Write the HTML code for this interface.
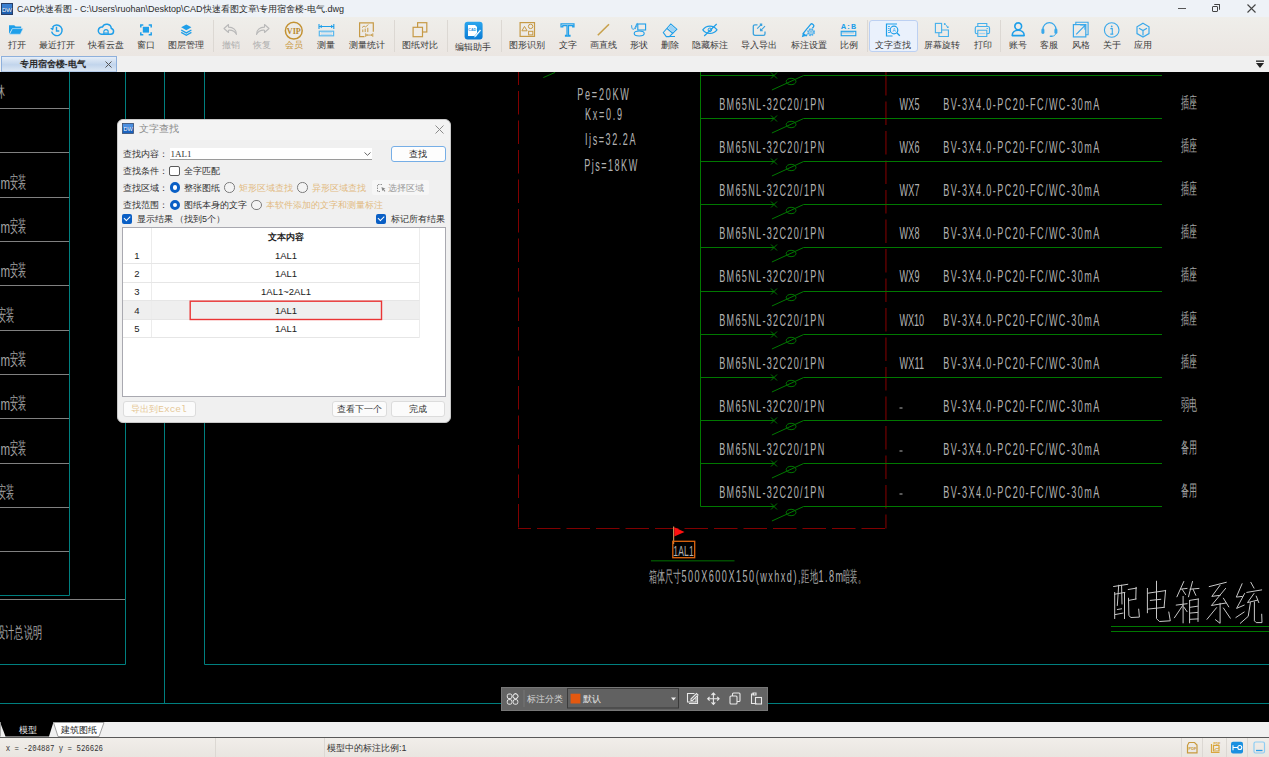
<!DOCTYPE html>
<html><head><meta charset="utf-8">
<style>
*{box-sizing:border-box}
html,body{margin:0;padding:0}
body{width:1269px;height:757px;overflow:hidden;position:relative;background:#000;font-family:"Liberation Sans",sans-serif}
.a{position:absolute}
#title{left:0;top:0;width:1269px;height:17px;background:#eef2f7}
#toolbar{left:0;top:17px;width:1269px;height:39px;background:linear-gradient(#efeeea,#ebe6e2)}
#tabbar{left:0;top:56px;width:1269px;height:16px;background:#f0f0f0}
.lbl{position:absolute;top:40px;font-size:9px;line-height:10px;color:#3a3a3a;white-space:nowrap;transform:translateX(-50%)}
.ic{position:absolute;overflow:visible}
.sep{position:absolute;top:20px;width:1px;height:32px;background:#dcd8d3}
#canvas{left:0;top:72px;width:1269px;height:650px;background:#000}
#sheettabs{left:0;top:722px;width:1269px;height:15px;background:#f0f0f0}
#status{left:0;top:737px;width:1269px;height:20px;background:linear-gradient(#f1eeea,#e9e5e0);border-top:1px solid #585858}
.dl{font-size:9px;line-height:10px;color:#333;white-space:nowrap}
.rad{width:10.5px;height:10.5px;border-radius:50%;border:1px solid #7d7d7d;background:#f3f3f3}
.rad.on{border:3.2px solid #0a5fc5;background:#fff}
.chk{width:10px;height:10px;border-radius:2px;background:#0a5fc5}
.chk::after{content:"";position:absolute;left:2.3px;top:2px;width:4.5px;height:2.5px;border-left:1.2px solid #fff;border-bottom:1.2px solid #fff;transform:rotate(-45deg)}
.num{font-size:9.5px;line-height:11px;color:#222;transform:translateX(-50%);white-space:nowrap}
.btn{background:#fbfbfb;border:1px solid #dcdcdc;border-radius:3px}
</style></head><body>
<div id="title" class="a">
<svg class="a" style="left:1px;top:3px" width="12" height="12" viewBox="0 0 12 12"><rect x="0.5" y="0.5" width="11" height="11" fill="#1d5fb0" stroke="#2a3f66"/><rect x="1" y="1" width="10" height="4" fill="#3a7fd0"/><text x="6" y="9" font-size="6" fill="#fff" text-anchor="middle" font-family="Liberation Sans">DW</text></svg>
<div class="a" style="left:17px;top:2.5px;font-size:9px;line-height:12px;color:#2b2b2b;white-space:nowrap">CAD快速看图 - C:\Users\ruohan\Desktop\CAD快速看图文章\专用宿舍楼-电气.dwg</div>
<div class="a" style="left:1178px;top:8px;width:8px;height:1px;background:#555"></div>
<div class="a" style="left:1212px;top:6px;width:6px;height:6px;border:1.2px solid #444;border-radius:1px"></div>
<div class="a" style="left:1214px;top:4px;width:6px;height:6px;border-top:1.2px solid #444;border-right:1.2px solid #444;border-radius:1px"></div>
<svg class="a" style="left:1247px;top:4px" width="9" height="9" viewBox="0 0 9 9"><path d="M0.5 0.5L8.5 8.5M8.5 0.5L0.5 8.5" stroke="#444" stroke-width="1.1"/></svg>
</div>
<div id="toolbar" class="a"></div>
<div class="a" style="left:868.8px;top:19.7px;width:49px;height:32.8px;background:#eaf1fc;border:1px solid #bcd0f2;border-radius:3px"></div>
<div class="sep" style="left:213px"></div><div class="sep" style="left:393.6px"></div><div class="sep" style="left:447px"></div><div class="sep" style="left:500.5px"></div><div class="sep" style="left:866.6px"></div><div class="sep" style="left:1000.4px"></div>
<svg class="a" style="left:0;top:0" width="1269" height="56" viewBox="0 0 1269 56">
<!-- folder -->
<path d="M9 25.2h5.2l1.4 1.4h5.6v1.9H12.1L9 33.9z" fill="#1f9fe9"/>
<path d="M9.6 34.2l2.9-5.6h10.6l-2.8 5.6z" fill="#1f9fe9" stroke="#cfe9fa" stroke-width="0.5"/>
<!-- clock -->
<path d="M52.4 27.3A5.3 5.3 0 1 1 51.6 31.6" fill="none" stroke="#1f9fe9" stroke-width="1.4"/>
<path d="M50.1 28.4l2.9 2.1 1-3.5z" fill="#1f9fe9"/>
<path d="M56.5 26.8v4.2h2.8" fill="none" stroke="#1f9fe9" stroke-width="1.4"/>
<!-- cloud -->
<path d="M101.5 34.3h9.2a3 3 0 0 0 0.6-5.9 4.6 4.6 0 0 0-8.8-1.4 3.6 3.6 0 0 0-1 7.3z" fill="none" stroke="#1f9fe9" stroke-width="1.5"/>
<path d="M103.8 35v-3.2a2.2 2.2 0 0 1 4.4 0V35M103.8 33h4.4" fill="none" stroke="#1f9fe9" stroke-width="1.1"/>
<!-- window -->
<rect x="142.8" y="26.8" width="6.2" height="5.8" fill="#1f9fe9"/>
<path d="M140.8 27.5v-2.5h2.5M148.7 25h2.5v2.5M151.2 32.2v2.5h-2.5M143.3 34.7h-2.5v-2.5" fill="none" stroke="#1f9fe9" stroke-width="1.5"/>
<!-- layers -->
<path d="M181.2 27.3l5.1-2.9 5.1 2.9-5.1 2.9z" fill="#1f9fe9"/>
<path d="M181.2 30l5.1 2.9 5.1-2.9M181.2 32.4l5.1 2.9 5.1-2.9" fill="none" stroke="#1f9fe9" stroke-width="1.3"/>
<!-- undo -->
<path d="M228.5 24.5l-4.5 4 4.5 4v-2.3c3.5-0.3 6.5 1.2 8 4.3 0.2-4.4-3.3-7.3-8-7.4z" fill="none" stroke="#b9b9b9" stroke-width="1.1" stroke-linejoin="round"/>
<!-- redo -->
<path d="M264.5 24.5l4.5 4-4.5 4v-2.3c-3.5-0.3-6.5 1.2-8 4.3-0.2-4.4 3.3-7.3 8-7.4z" fill="none" stroke="#b9b9b9" stroke-width="1.1" stroke-linejoin="round"/>
<!-- VIP -->
<circle cx="293.8" cy="30.7" r="8.4" fill="none" stroke="#c39233" stroke-width="1.5"/>
<text x="293.8" y="33.8" font-family="Liberation Serif" font-weight="bold" font-size="8.2" fill="#b8892e" text-anchor="middle" textLength="14" lengthAdjust="spacingAndGlyphs">VIP</text>
<!-- measure -->
<path d="M319 24v5M333.8 24v5M319.5 26.5h14" fill="none" stroke="#1f9fe9" stroke-width="1.1"/>
<path d="M319.3 26.5l2.5-1.8v3.6zM333.5 26.5l-2.5-1.8v3.6z" fill="#1f9fe9"/>
<rect x="319.3" y="31.2" width="14.3" height="4.6" fill="none" stroke="#5ab8ee" stroke-width="1.2"/>
<path d="M321 32.6h11M321 34.4h11" stroke="#a8d8f5" stroke-width="0.8"/>
<!-- measure stats -->
<path d="M364.5 36.7h-4.9V22.8h13.7v9" fill="none" stroke="#c69a46" stroke-width="1.2"/>
<path d="M362.8 29.5v2.6M365.2 28.6v3.5M367.8 27.8v4.3" stroke="#c69a46" stroke-width="1"/>
<path d="M362 27.6l2-1.6 1.6 0.9 2.8-2.3" fill="none" stroke="#c69a46" stroke-width="0.9"/>
<path d="M365.7 33.3v3.6M372.8 33.3v3.6M366 35.1h6.5" stroke="#c69a46" stroke-width="0.9"/>
<path d="M366 35.1l1.5-1v2zM372.5 35.1l-1.5-1v2z" fill="#c69a46"/>
<!-- compare -->
<rect x="417.6" y="22.7" width="9.2" height="9.3" fill="none" stroke="#c69a46" stroke-width="1.2"/>
<rect x="413.1" y="27.3" width="9.4" height="9.4" fill="#f0ede8" stroke="#c69a46" stroke-width="1.2"/>
<!-- edit helper -->
<defs><linearGradient id="gb" x1="0" y1="0" x2="0" y2="1"><stop offset="0" stop-color="#2ba6ee"/><stop offset="1" stop-color="#0a7bd4"/></linearGradient></defs>
<rect x="464.6" y="21.8" width="18" height="17.8" rx="3" fill="url(#gb)"/>
<path d="M468 25h7l2 2v9h-9z" fill="#fff"/>
<text x="472.2" y="31" font-size="3.6" font-weight="bold" fill="#1a8fe0" text-anchor="middle" font-family="Liberation Sans">CAD</text>
<path d="M474.5 36l5.5-6.5 1.2 1-5.5 6.5-1.8 0.6z" fill="#fff" stroke="#1a8fe0" stroke-width="0.4"/>
<!-- shapes recog -->
<rect x="520.1" y="22.6" width="14.4" height="13.8" fill="none" stroke="#c69a46" stroke-width="1.2"/>
<path d="M521.9 30.8l2.6-4.4 2.6 4.4z" fill="none" stroke="#c69a46" stroke-width="1"/>
<circle cx="530.6" cy="26.4" r="2.2" fill="none" stroke="#c69a46" stroke-width="1"/>
<rect x="528.6" y="31.3" width="4.2" height="3.6" fill="none" stroke="#c69a46" stroke-width="1"/>
<!-- T -->
<path d="M561 23.8h13v3h-1.3v-1.2h-4.2v9.8h1.5v0.8h-4.5v-0.8h1.5v-9.8h-4.2v1.2H561z" fill="none" stroke="#1f9fe9" stroke-width="1.2"/>
<!-- line -->
<path d="M597.8 35.3L609 24.3" stroke="#c8a14c" stroke-width="1.6"/>
<!-- shapes -->
<path d="M631.6 25.2c0 2.6 0.6 4.2 1.6 4.2 1.2 0 2.6-3.3 3.5-5.6 0.4-0.9 0.9-0.5 0.6 0.4l-2.2 5" fill="none" stroke="#3aa6e8" stroke-width="1"/>
<rect x="637.8" y="24" width="7.8" height="6" fill="none" stroke="#1f9fe9" stroke-width="1.1"/>
<ellipse cx="639.2" cy="33.5" rx="5" ry="2.5" fill="none" stroke="#1f9fe9" stroke-width="1.1"/>
<!-- eraser -->
<path d="M663.3 32.5l7.5-8.5 6 5.2-7.5 7.4h-3z" fill="none" stroke="#1f9fe9" stroke-width="1.1"/>
<path d="M667 28.5l6 5" stroke="#1f9fe9" stroke-width="1.1"/>
<path d="M670.8 25l5 4.2-2.8 3-5-4.2z" fill="#9ed3f5"/>
<path d="M670 36.5h5" stroke="#1f9fe9" stroke-width="1"/>
<!-- eye -->
<path d="M702.8 29.8c3.7-4.8 10.5-4.8 14.2 0-3.7 4.8-10.5 4.8-14.2 0z" fill="none" stroke="#1f9fe9" stroke-width="1.2"/>
<circle cx="709.9" cy="29.8" r="1.8" fill="none" stroke="#1f9fe9" stroke-width="1"/>
<path d="M704.2 36l12.5-12" stroke="#1f9fe9" stroke-width="1.2"/>
<!-- import export -->
<path d="M757.5 24.8h-2.6a1.6 1.6 0 0 0-1.6 1.6v7.3a1.6 1.6 0 0 0 1.6 1.6h8.5a1.6 1.6 0 0 0 1.6-1.6v-2.2" fill="none" stroke="#3aa2de" stroke-width="1.3"/>
<path d="M757.2 28.6l4.4-4.4M759.8 24.1h1.9v1.9" fill="none" stroke="#3aa2de" stroke-width="1.1"/>
<path d="M765 26.2l-4.4 4.4M760.5 28.4v2.3h2.3" fill="none" stroke="#3aa2de" stroke-width="1.1"/>
<!-- annot setting -->
<path d="M803.2 33.4L810.6 24.4a1.5 1.5 0 0 1 2.1-0.2l0.6 0.5a1.5 1.5 0 0 1 0.2 2.1L806.1 35.8z" fill="none" stroke="#1f9fe9" stroke-width="1.3" stroke-linejoin="round"/>
<path d="M801.8 37.2l1.1-4.2 3.3 2.8z" fill="#1f9fe9"/>
<circle cx="811" cy="32.2" r="4.3" fill="#ede9e4"/>
<circle cx="811" cy="32.2" r="3.1" fill="none" stroke="#4aaeec" stroke-width="1.7" stroke-dasharray="1.6 0.85"/>
<circle cx="811" cy="32.2" r="2.4" fill="none" stroke="#4aaeec" stroke-width="0.8"/>
<circle cx="811" cy="32.2" r="1.1" fill="none" stroke="#4aaeec" stroke-width="0.8"/>
<!-- ratio -->
<text x="848.4" y="29" font-family="Liberation Mono" font-weight="bold" font-size="6.6" fill="#1f9fe9" text-anchor="middle" textLength="15" lengthAdjust="spacingAndGlyphs">A:B</text>
<rect x="841.2" y="31.3" width="14.6" height="4.4" fill="none" stroke="#1f9fe9" stroke-width="1.1"/>
<path d="M843 31.5v2M845 31.5v2M847 31.5v2M849 31.5v2M851 31.5v2M853 31.5v2" stroke="#1f9fe9" stroke-width="0.7"/>
<!-- find text -->
<path d="M897 24h-10.5v12h6" fill="none" stroke="#1f9fe9" stroke-width="1.2"/>
<path d="M888 26.5h2M888 28.5h1.5M888 30.5h1.5M888 32.5h2" stroke="#1f9fe9" stroke-width="0.8"/>
<circle cx="894" cy="30" r="3.8" fill="none" stroke="#1f9fe9" stroke-width="1.2"/>
<path d="M896.8 32.8l3 3" stroke="#1f9fe9" stroke-width="1.3"/>
<text x="894" y="31.8" font-size="4.8" fill="#1f9fe9" text-anchor="middle" font-family="Liberation Sans">A</text>
<!-- rotate -->
<rect x="935.4" y="23.4" width="6.2" height="9.3" fill="none" stroke="#45b0ec" stroke-width="1.1"/>
<path d="M941.6 30h6.8v6.5h-9.5v-3.8" fill="none" stroke="#45b0ec" stroke-width="1.1"/>
<path d="M944.6 23.8l3.4 3.6" fill="none" stroke="#45b0ec" stroke-width="1.1" stroke-dasharray="1.3 0.8"/>
<circle cx="944.7" cy="24" r="0.9" fill="#45b0ec"/><circle cx="947.8" cy="27.2" r="0.9" fill="#45b0ec"/>
<!-- print -->
<path d="M977.8 26.5v-3h9v3" fill="none" stroke="#45b0ec" stroke-width="1.1"/>
<rect x="975.3" y="26.5" width="14.2" height="7.2" rx="1.5" fill="none" stroke="#45b0ec" stroke-width="1.2"/>
<path d="M977.8 30.3h9v6.2h-9z" fill="#ede9e4" stroke="#45b0ec" stroke-width="1.1"/>
<path d="M979.3 33.5h6" stroke="#9fd3f3" stroke-width="1.2"/>
<path d="M986.5 28.5h1.5" stroke="#45b0ec" stroke-width="0.8"/>
<!-- user -->
<circle cx="1018.2" cy="26.3" r="3.4" fill="none" stroke="#1f9fe9" stroke-width="1.6"/>
<path d="M1012.2 35.6c0-3.3 2.7-5.4 6-5.4s6 2.1 6 5.4z" fill="none" stroke="#1f9fe9" stroke-width="1.6" stroke-linejoin="round"/>
<!-- headset -->
<path d="M1042.9 31.2v-2a6.5 6.5 0 0 1 13 0v2" fill="none" stroke="#3aa8ea" stroke-width="1.2"/>
<rect x="1041.4" y="28.6" width="3" height="5.4" rx="1.4" fill="#3aa8ea"/>
<rect x="1054.4" y="28.6" width="3" height="5.4" rx="1.4" fill="#3aa8ea"/>
<path d="M1055.5 34c-0.4 1.6-1.8 2.2-3.6 2.2" fill="none" stroke="#3aa8ea" stroke-width="0.9"/>
<rect x="1049.6" y="35.4" width="3" height="1.6" rx="0.8" fill="#3aa8ea"/>
<!-- style -->
<path d="M1075.8 24.6v-2.3h12.3v12.4h-2.3" fill="none" stroke="#3aa8ea" stroke-width="1.1"/>
<rect x="1073.4" y="24.6" width="12.4" height="12.3" fill="none" stroke="#3aa8ea" stroke-width="1.2"/>
<path d="M1076.2 34.3l8.6-8.6M1080.2 24.9h4.8v4.8" fill="none" stroke="#3aa8ea" stroke-width="1.2"/>
<!-- info -->
<circle cx="1111.7" cy="30" r="7.3" fill="none" stroke="#3aa8ea" stroke-width="1.1"/>
<circle cx="1111.7" cy="26.4" r="0.9" fill="#3aa8ea"/>
<path d="M1110.4 28.6h1.9v5.4M1110.3 34.1h3" fill="none" stroke="#3aa8ea" stroke-width="1.1"/>
<!-- cube -->
<path d="M1143 23.3l6 3.5v6.8l-6 3.5-6-3.5v-6.8z" fill="none" stroke="#3aa8ea" stroke-width="1.2"/>
<path d="M1139 28.3l4 2.3 4-2.3M1143 30.6v4.8" fill="none" stroke="#3aa8ea" stroke-width="1.2"/>
</svg>
<div class="lbl" style="left:16.7px">打开</div>
<div class="lbl" style="left:56.7px">最近打开</div>
<div class="lbl" style="left:105.6px">快看云盘</div>
<div class="lbl" style="left:146px">窗口</div>
<div class="lbl" style="left:186px">图层管理</div>
<div class="lbl" style="left:230.7px;color:#b0b0b0">撤销</div>
<div class="lbl" style="left:261.6px;color:#b0b0b0">恢复</div>
<div class="lbl" style="left:294px;color:#c99a45">会员</div>
<div class="lbl" style="left:326.3px">测量</div>
<div class="lbl" style="left:366.5px">测量统计</div>
<div class="lbl" style="left:420px">图纸对比</div>
<div class="lbl" style="left:473.4px;top:41.5px">编辑助手</div>
<div class="lbl" style="left:527.4px">图形识别</div>
<div class="lbl" style="left:567.6px">文字</div>
<div class="lbl" style="left:603px">画直线</div>
<div class="lbl" style="left:638.8px">形状</div>
<div class="lbl" style="left:669.9px">删除</div>
<div class="lbl" style="left:710px">隐藏标注</div>
<div class="lbl" style="left:759.4px">导入导出</div>
<div class="lbl" style="left:808.6px">标注设置</div>
<div class="lbl" style="left:849px">比例</div>
<div class="lbl" style="left:893px">文字查找</div>
<div class="lbl" style="left:942.3px">屏幕旋转</div>
<div class="lbl" style="left:982.5px">打印</div>
<div class="lbl" style="left:1018px">账号</div>
<div class="lbl" style="left:1049.3px">客服</div>
<div class="lbl" style="left:1080.7px">风格</div>
<div class="lbl" style="left:1112px">关于</div>
<div class="lbl" style="left:1142.8px">应用</div>
<div id="tabbar" class="a"></div>
<div class="a" style="left:1px;top:56px;width:116px;height:16px;border:1px solid #8eb0dc;border-bottom-color:#b5cbe8;background:linear-gradient(#e6eef8,#c2d5ec 55%,#dbe6f3)"></div>
<div class="a" style="left:19.5px;top:58.5px;font-size:9.3px;line-height:11px;font-weight:bold;color:#2a2a2a;white-space:nowrap">专用宿舍楼-电气</div>
<svg class="a" style="left:105px;top:61px" width="7" height="7" viewBox="0 0 7 7"><path d="M0.5 0.5L6.5 6.5M6.5 0.5L0.5 6.5" stroke="#555" stroke-width="1"/></svg>
<svg class="a" style="left:1255px;top:59.5px" width="10" height="9" viewBox="0 0 10 9"><rect x="1" y="0.5" width="8" height="1.3" fill="#222"/><path d="M1 3h8l-4 5z" fill="#222"/></svg>
<svg id="canvas" class="a" width="1269" height="650" viewBox="0 72 1269 650">
<g stroke="#007f7f" stroke-width="1" fill="none">
<path d="M69.5 72V595.5H0M125.5 72V664.5H0M164.5 72V703.5M0 703.5H1269M204.5 72V664.5H1269"/>
</g>
<g stroke="#808080" stroke-width="1">
<path d="M0 108.5H69"/>
<path d="M0 152.5H69"/>
<path d="M0 197.5H69"/>
<path d="M0 241.5H69"/>
<path d="M0 285.5H69"/>
<path d="M0 330.5H69"/>
<path d="M0 374.5H69"/>
<path d="M0 418.5H69"/>
<path d="M0 463.5H69"/>
<path d="M0 507.5H69"/>
<path d="M0 551.5H69"/>
<path d="M0 599.5H125"/>
</g>
<g font-family="Liberation Sans">
<text x="0.6" y="188.5" font-size="16" fill="#a4a4a4" textLength="9.6" lengthAdjust="spacingAndGlyphs" >m</text>
<text x="10.3" y="187.5" font-size="17" fill="#a4a4a4" textLength="16.2" lengthAdjust="spacingAndGlyphs" >安装</text>
<text x="0.6" y="232.5" font-size="16" fill="#a4a4a4" textLength="9.6" lengthAdjust="spacingAndGlyphs" >m</text>
<text x="10.3" y="231.5" font-size="17" fill="#a4a4a4" textLength="16.2" lengthAdjust="spacingAndGlyphs" >安装</text>
<text x="0.6" y="276.5" font-size="16" fill="#a4a4a4" textLength="9.6" lengthAdjust="spacingAndGlyphs" >m</text>
<text x="10.3" y="275.5" font-size="17" fill="#a4a4a4" textLength="16.2" lengthAdjust="spacingAndGlyphs" >安装</text>
<text x="0.6" y="365.5" font-size="16" fill="#a4a4a4" textLength="9.6" lengthAdjust="spacingAndGlyphs" >m</text>
<text x="10.3" y="364.5" font-size="17" fill="#a4a4a4" textLength="16.2" lengthAdjust="spacingAndGlyphs" >安装</text>
<text x="0.6" y="409.5" font-size="16" fill="#a4a4a4" textLength="9.6" lengthAdjust="spacingAndGlyphs" >m</text>
<text x="10.3" y="408.5" font-size="17" fill="#a4a4a4" textLength="16.2" lengthAdjust="spacingAndGlyphs" >安装</text>
<text x="0.6" y="454.5" font-size="16" fill="#a4a4a4" textLength="9.6" lengthAdjust="spacingAndGlyphs" >m</text>
<text x="10.3" y="453.5" font-size="17" fill="#a4a4a4" textLength="16.2" lengthAdjust="spacingAndGlyphs" >安装</text>
<text x="-2.5" y="320.5" font-size="17" fill="#a4a4a4" textLength="16.2" lengthAdjust="spacingAndGlyphs" >安装</text>
<text x="-2.5" y="497.5" font-size="17" fill="#a4a4a4" textLength="16.2" lengthAdjust="spacingAndGlyphs" >安装</text>
<text x="-4" y="638" font-size="16" fill="#a4a4a4" textLength="46" lengthAdjust="spacingAndGlyphs" >设计总说明</text>
<text x="-6" y="97" font-size="15" fill="#a4a4a4" textLength="11" lengthAdjust="spacingAndGlyphs" >林</text>
<text transform="translate(577.3,100) scale(0.55,1)" font-size="16.5" fill="#b2b2b2" textLength="93.64" lengthAdjust="spacing" >Pe=20KW</text>
<text transform="translate(585,119.8) scale(0.55,1)" font-size="16.5" fill="#b2b2b2" textLength="67.27" lengthAdjust="spacing" >Kx=0.9</text>
<text transform="translate(585,145) scale(0.55,1)" font-size="16.5" fill="#b2b2b2" textLength="91.82" lengthAdjust="spacing" >Ijs=32.2A</text>
<text transform="translate(584.2,171) scale(0.55,1)" font-size="16.5" fill="#b2b2b2" textLength="96.36" lengthAdjust="spacing" >Pjs=18KW</text>
</g>
<g stroke="#800000" stroke-width="1" fill="none">
<path d="M518.5 62V528.5" stroke-dasharray="23.5 6" stroke-dashoffset="0.5"/>
<path d="M885.9 72V528.5" stroke="#4c0000" stroke-width="1.8" stroke-dasharray="23.5 6"/>
<path d="M518 528.5H886" stroke-dasharray="13 6 23.5 6 23.5 6 23.5 6 23.5 6 23.5 6 23.5 6 23.5 6 23.5 6 23.5 6 23.5 6 23.5 6 23.5 6 23.5 6"/>
</g>
<g stroke="#007800" stroke-width="1" fill="none">
<path d="M700.5 72V506.5"/>
<path d="M700.5 75.5H774M771 72.5l6 6M777 72.5l-6 6M771.9 90.0L803.6 75.5H1162"/>
<ellipse cx="791.1" cy="81.5" rx="4.9" ry="3.2"/>
<path d="M700.5 118.5H774M771 115.5l6 6M777 115.5l-6 6M771.9 133.0L803.6 118.5H1162"/>
<ellipse cx="791.1" cy="124.5" rx="4.9" ry="3.2"/>
<path d="M700.5 161.5H774M771 158.5l6 6M777 158.5l-6 6M771.9 176.0L803.6 161.5H1162"/>
<ellipse cx="791.1" cy="167.5" rx="4.9" ry="3.2"/>
<path d="M700.5 204.5H774M771 201.5l6 6M777 201.5l-6 6M771.9 219.0L803.6 204.5H1162"/>
<ellipse cx="791.1" cy="210.5" rx="4.9" ry="3.2"/>
<path d="M700.5 247.5H774M771 244.5l6 6M777 244.5l-6 6M771.9 262.0L803.6 247.5H1162"/>
<ellipse cx="791.1" cy="253.5" rx="4.9" ry="3.2"/>
<path d="M700.5 291.5H774M771 288.5l6 6M777 288.5l-6 6M771.9 306.0L803.6 291.5H1162"/>
<ellipse cx="791.1" cy="297.5" rx="4.9" ry="3.2"/>
<path d="M700.5 334.5H774M771 331.5l6 6M777 331.5l-6 6M771.9 349.0L803.6 334.5H1162"/>
<ellipse cx="791.1" cy="340.5" rx="4.9" ry="3.2"/>
<path d="M700.5 377.5H774M771 374.5l6 6M777 374.5l-6 6M771.9 392.0L803.6 377.5H1162"/>
<ellipse cx="791.1" cy="383.5" rx="4.9" ry="3.2"/>
<path d="M700.5 420.5H774M771 417.5l6 6M777 417.5l-6 6M771.9 435.0L803.6 420.5H1162"/>
<ellipse cx="791.1" cy="426.5" rx="4.9" ry="3.2"/>
<path d="M700.5 463.5H774M771 460.5l6 6M777 460.5l-6 6M771.9 478.0L803.6 463.5H1162"/>
<ellipse cx="791.1" cy="469.5" rx="4.9" ry="3.2"/>
<path d="M700.5 506.5H774M771 503.5l6 6M777 503.5l-6 6M771.9 521.0L803.6 506.5H1162"/>
<ellipse cx="791.1" cy="512.5" rx="4.9" ry="3.2"/>
<path d="M543.3 77.6L555.1 72.4"/>
</g>
<g font-family="Liberation Sans">
<text transform="translate(719.2,109.5) scale(0.55,1)" font-size="16.5" fill="#b2b2b2" textLength="190.91" lengthAdjust="spacing" >BM65NL-32C20/1PN</text>
<text transform="translate(899.6,109.5) scale(0.55,1)" font-size="16.5" fill="#b2b2b2" textLength="36.36" lengthAdjust="spacing" >WX5</text>
<text transform="translate(943.2,109.5) scale(0.55,1)" font-size="16.5" fill="#b2b2b2" textLength="283.64" lengthAdjust="spacing" >BV-3X4.0-PC20-FC/WC-30mA</text>
<text x="1180.5" y="107.5" font-size="16" fill="#a4a4a4" textLength="16" lengthAdjust="spacingAndGlyphs" >插座</text>
<text transform="translate(719.2,152.5) scale(0.55,1)" font-size="16.5" fill="#b2b2b2" textLength="190.91" lengthAdjust="spacing" >BM65NL-32C20/1PN</text>
<text transform="translate(899.6,152.5) scale(0.55,1)" font-size="16.5" fill="#b2b2b2" textLength="36.36" lengthAdjust="spacing" >WX6</text>
<text transform="translate(943.2,152.5) scale(0.55,1)" font-size="16.5" fill="#b2b2b2" textLength="283.64" lengthAdjust="spacing" >BV-3X4.0-PC20-FC/WC-30mA</text>
<text x="1180.5" y="150.5" font-size="16" fill="#a4a4a4" textLength="16" lengthAdjust="spacingAndGlyphs" >插座</text>
<text transform="translate(719.2,195.5) scale(0.55,1)" font-size="16.5" fill="#b2b2b2" textLength="190.91" lengthAdjust="spacing" >BM65NL-32C20/1PN</text>
<text transform="translate(899.6,195.5) scale(0.55,1)" font-size="16.5" fill="#b2b2b2" textLength="36.36" lengthAdjust="spacing" >WX7</text>
<text transform="translate(943.2,195.5) scale(0.55,1)" font-size="16.5" fill="#b2b2b2" textLength="283.64" lengthAdjust="spacing" >BV-3X4.0-PC20-FC/WC-30mA</text>
<text x="1180.5" y="193.5" font-size="16" fill="#a4a4a4" textLength="16" lengthAdjust="spacingAndGlyphs" >插座</text>
<text transform="translate(719.2,238.5) scale(0.55,1)" font-size="16.5" fill="#b2b2b2" textLength="190.91" lengthAdjust="spacing" >BM65NL-32C20/1PN</text>
<text transform="translate(899.6,238.5) scale(0.55,1)" font-size="16.5" fill="#b2b2b2" textLength="36.36" lengthAdjust="spacing" >WX8</text>
<text transform="translate(943.2,238.5) scale(0.55,1)" font-size="16.5" fill="#b2b2b2" textLength="283.64" lengthAdjust="spacing" >BV-3X4.0-PC20-FC/WC-30mA</text>
<text x="1180.5" y="236.5" font-size="16" fill="#a4a4a4" textLength="16" lengthAdjust="spacingAndGlyphs" >插座</text>
<text transform="translate(719.2,281.5) scale(0.55,1)" font-size="16.5" fill="#b2b2b2" textLength="190.91" lengthAdjust="spacing" >BM65NL-32C20/1PN</text>
<text transform="translate(899.6,281.5) scale(0.55,1)" font-size="16.5" fill="#b2b2b2" textLength="36.36" lengthAdjust="spacing" >WX9</text>
<text transform="translate(943.2,281.5) scale(0.55,1)" font-size="16.5" fill="#b2b2b2" textLength="283.64" lengthAdjust="spacing" >BV-3X4.0-PC20-FC/WC-30mA</text>
<text x="1180.5" y="279.5" font-size="16" fill="#a4a4a4" textLength="16" lengthAdjust="spacingAndGlyphs" >插座</text>
<text transform="translate(719.2,325.5) scale(0.55,1)" font-size="16.5" fill="#b2b2b2" textLength="190.91" lengthAdjust="spacing" >BM65NL-32C20/1PN</text>
<text transform="translate(899.6,325.5) scale(0.55,1)" font-size="16.5" fill="#b2b2b2" textLength="44.55" lengthAdjust="spacing" >WX10</text>
<text transform="translate(943.2,325.5) scale(0.55,1)" font-size="16.5" fill="#b2b2b2" textLength="283.64" lengthAdjust="spacing" >BV-3X4.0-PC20-FC/WC-30mA</text>
<text x="1180.5" y="323.5" font-size="16" fill="#a4a4a4" textLength="16" lengthAdjust="spacingAndGlyphs" >插座</text>
<text transform="translate(719.2,368.5) scale(0.55,1)" font-size="16.5" fill="#b2b2b2" textLength="190.91" lengthAdjust="spacing" >BM65NL-32C20/1PN</text>
<text transform="translate(899.6,368.5) scale(0.55,1)" font-size="16.5" fill="#b2b2b2" textLength="44.55" lengthAdjust="spacing" >WX11</text>
<text transform="translate(943.2,368.5) scale(0.55,1)" font-size="16.5" fill="#b2b2b2" textLength="283.64" lengthAdjust="spacing" >BV-3X4.0-PC20-FC/WC-30mA</text>
<text x="1180.5" y="366.5" font-size="16" fill="#a4a4a4" textLength="16" lengthAdjust="spacingAndGlyphs" >插座</text>
<text transform="translate(719.2,411.5) scale(0.55,1)" font-size="16.5" fill="#b2b2b2" textLength="190.91" lengthAdjust="spacing" >BM65NL-32C20/1PN</text>
<path d="M899.5 408.0h3" stroke="#b2b2b2" stroke-width="1"/>
<text transform="translate(943.2,411.5) scale(0.55,1)" font-size="16.5" fill="#b2b2b2" textLength="283.64" lengthAdjust="spacing" >BV-3X4.0-PC20-FC/WC-30mA</text>
<text x="1180.5" y="409.5" font-size="16" fill="#a4a4a4" textLength="16" lengthAdjust="spacingAndGlyphs" >弱电</text>
<text transform="translate(719.2,454.5) scale(0.55,1)" font-size="16.5" fill="#b2b2b2" textLength="190.91" lengthAdjust="spacing" >BM65NL-32C20/1PN</text>
<path d="M899.5 451.0h3" stroke="#b2b2b2" stroke-width="1"/>
<text transform="translate(943.2,454.5) scale(0.55,1)" font-size="16.5" fill="#b2b2b2" textLength="283.64" lengthAdjust="spacing" >BV-3X4.0-PC20-FC/WC-30mA</text>
<text x="1180.5" y="452.5" font-size="16" fill="#a4a4a4" textLength="16" lengthAdjust="spacingAndGlyphs" >备用</text>
<text transform="translate(719.2,497.5) scale(0.55,1)" font-size="16.5" fill="#b2b2b2" textLength="190.91" lengthAdjust="spacing" >BM65NL-32C20/1PN</text>
<path d="M899.5 494.0h3" stroke="#b2b2b2" stroke-width="1"/>
<text transform="translate(943.2,497.5) scale(0.55,1)" font-size="16.5" fill="#b2b2b2" textLength="283.64" lengthAdjust="spacing" >BV-3X4.0-PC20-FC/WC-30mA</text>
<text x="1180.5" y="495.5" font-size="16" fill="#a4a4a4" textLength="16" lengthAdjust="spacingAndGlyphs" >备用</text>
</g>
<path d="M673.6 526.5V544" stroke="#c08a50" stroke-width="1.2"/>
<path d="M674.3 527.3L684.5 532L674.3 536.6z" fill="#ff1010"/>
<rect x="672.8" y="541.3" width="21.9" height="16.4" fill="none" stroke="#e0660f" stroke-width="1.3"/>
<text transform="translate(673.3,556) scale(0.55,1)" font-size="15.5" fill="#b2b2b2" textLength="37.27" lengthAdjust="spacing" font-family="Liberation Sans">1AL1</text>
<path d="M651 560.8H734.5" stroke="#004c00" stroke-width="1.5"/>
<g font-family="Liberation Sans">
<text x="648.5" y="582" font-size="16" fill="#a4a4a4" textLength="32" lengthAdjust="spacingAndGlyphs" >箱体尺寸</text>
<text transform="translate(681.5,582) scale(0.55,1)" font-size="16.5" fill="#b2b2b2" textLength="216.36" lengthAdjust="spacing" >500X600X150(wxhxd),</text>
<text x="801.3" y="582" font-size="16" fill="#a4a4a4" textLength="16.5" lengthAdjust="spacingAndGlyphs" >距地</text>
<text transform="translate(818.5,582) scale(0.55,1)" font-size="16.5" fill="#b2b2b2" textLength="44.55" lengthAdjust="spacing" >1.8m</text>
<text x="843" y="582" font-size="16" fill="#a4a4a4" textLength="22" lengthAdjust="spacingAndGlyphs" >暗装。</text>
</g>
<g fill="none" stroke="#c8c8c8" stroke-width="1" stroke-linejoin="round" stroke-linecap="round">
<path d="M1113.6 586.5L1127.8 584.3"/>
<path d="M1114.7 592.4V618.6"/>
<path d="M1124.5 592.4V618.6"/>
<path d="M1114.7 594.2L1124.9 592.4"/>
<path d="M1118.7 585.2L1117.3 605.5"/>
<path d="M1121.6 585.2L1122 604"/>
<path d="M1117.3 609.5L1121.6 608.8"/>
<path d="M1115.1 614.6L1123 613.1"/>
<path d="M1128.2 589.5L1136.5 588.1"/>
<path d="M1136.1 587.3L1135.8 599"/>
<path d="M1128.5 600.4L1136.1 599"/>
<path d="M1128.5 598.2L1128.9 615.7L1131 617.5L1139.4 617.1L1138.7 609.1"/>
<path d="M1147.4 588.4V612.8"/>
<path d="M1147.8 593.2L1165.6 590.6"/>
<path d="M1165.6 590.3L1164.1 607"/>
<path d="M1150.3 600.4L1160.8 599.3"/>
<path d="M1147.8 609.1L1164.5 607.3"/>
<path d="M1156.5 581.2V618.6L1159.4 621.5L1170.3 620.8L1168.8 612"/>
<path d="M1183.8 581.5L1176.9 596.8"/>
<path d="M1180.5 589.2L1187.1 588.4"/>
<path d="M1182.3 589.5L1185.6 594.6"/>
<path d="M1192.5 581.5L1188.5 596.8"/>
<path d="M1190 589.2L1199 588.4"/>
<path d="M1193.2 589.5L1195.8 595.3"/>
<path d="M1176.2 605.1L1187.1 603.7"/>
<path d="M1183.1 596.4V622.9"/>
<path d="M1182.7 605.5L1174.4 617.8"/>
<path d="M1183.8 607L1187.1 611.7"/>
<path d="M1189.6 600.4V622.9"/>
<path d="M1198.3 599L1198 621.5"/>
<path d="M1189.6 600.4L1198.3 599"/>
<path d="M1190 607.3L1197.6 606.2"/>
<path d="M1190 613.1L1197.6 612.4"/>
<path d="M1190 619.3L1198 618.9"/>
<path d="M1209.2 586.6L1226.3 582.3"/>
<path d="M1220.1 585.2L1211.8 596.4L1220.1 595.3"/>
<path d="M1225.6 588.4L1211.4 605.5L1225.9 603"/>
<path d="M1223.4 598.2L1228.8 606.9"/>
<path d="M1220.1 603.3V623.3L1215.4 619.7"/>
<path d="M1216.5 607.7L1207 619.3"/>
<path d="M1223.4 608L1230.3 618.2"/>
<path d="M1242.1 583.7L1236.3 597.1L1242.4 596.4"/>
<path d="M1244.6 593.5L1236.6 608.4L1244.2 605.1"/>
<path d="M1244.2 612L1235.9 617.5"/>
<path d="M1250.8 582.3L1254 588.1"/>
<path d="M1246.8 592.4L1261.7 589.9"/>
<path d="M1254 593.5L1247.5 602.6L1257.7 600.1"/>
<path d="M1256.2 596.1L1258.8 602.6"/>
<path d="M1250.4 602.6L1248.2 616.4L1240.3 623.3"/>
<path d="M1254.4 601.9V620.8L1256.2 622.6L1262 622.6L1261.7 614.2"/>
</g>
<path d="M1111 626.5H1269M1111 631.5H1269" stroke="#007800" stroke-width="1"/>
</svg>

<div id="dialog" class="a" style="left:116.5px;top:118.5px;width:334.3px;height:304px;background:#f0f0f0;border-radius:6px;border:1px solid #c9c9c9;box-shadow:0 0 2px rgba(0,0,0,.3)"></div>
<div class="a" style="left:117.5px;top:119.5px;width:332.3px;height:20.5px;background:#f3f3f3;border-radius:6px 6px 0 0"></div>
<svg class="a" style="left:122px;top:123px" width="12" height="11" viewBox="0 0 12 11"><rect x="0.5" y="0.5" width="11" height="10" fill="#1b63bf" stroke="#3a4f70" stroke-width="0.8"/><rect x="1" y="1" width="10" height="3.5" fill="#4b8fe0"/><text x="6" y="8.3" font-size="5.5" fill="#fff" text-anchor="middle" font-family="Liberation Sans">DW</text></svg>
<div class="a dl" style="left:138.5px;top:122.8px;font-size:10px;line-height:11px;color:#8a8a8a">文字查找</div>
<svg class="a" style="left:435px;top:125px" width="9" height="9" viewBox="0 0 9 9"><path d="M0.5 0.5L8.5 8.5M8.5 0.5L0.5 8.5" stroke="#8a8a8a" stroke-width="1"/></svg>
<div class="a dl" style="left:123px;top:149px">查找内容：</div>
<div class="a" style="left:170px;top:148px;width:202px;height:11.5px;background:#fff;border-bottom:1px solid #9a9a9a"></div>
<div class="a" style="left:170.5px;top:148.8px;font-family:'Liberation Serif',serif;font-size:9px;line-height:11px;color:#333">1AL1</div>
<svg class="a" style="left:364px;top:152px" width="7" height="4" viewBox="0 0 7 4"><path d="M0.5 0.5L3.5 3.3L6.5 0.5" fill="none" stroke="#555" stroke-width="0.9"/></svg>
<div class="a" style="left:390.5px;top:145.5px;width:55px;height:16.5px;background:#fdfdfd;border:1px solid #76aee6;border-radius:3px"></div>
<div class="a dl" style="left:418px;top:149px;transform:translateX(-50%);color:#222">查找</div>
<div class="a dl" style="left:123px;top:165.5px">查找条件：</div>
<div class="a" style="left:169.3px;top:165.5px;width:10.5px;height:10.2px;background:#fff;border:1px solid #5a5a5a;border-radius:2px"></div>
<div class="a dl" style="left:184px;top:165.5px">全字匹配</div>
<div class="a dl" style="left:123px;top:182.5px">查找区域：</div>
<div class="a rad on" style="left:169.7px;top:182.3px"></div>
<div class="a dl" style="left:184px;top:182.5px">整张图纸</div>
<div class="a rad" style="left:224.2px;top:182.3px"></div>
<div class="a dl" style="left:238.9px;top:182.5px;color:#e2bb82">矩形区域查找</div>
<div class="a rad" style="left:297px;top:182.3px"></div>
<div class="a dl" style="left:312.3px;top:182.5px;color:#e2bb82">异形区域查找</div>
<div class="a" style="left:372px;top:180px;width:57px;height:15px;background:#f6f6f6;border-radius:2px"></div>
<svg class="a" style="left:377px;top:184px" width="9" height="8" viewBox="0 0 9 8"><path d="M5 0.5H0.5v7H4" fill="none" stroke="#888" stroke-width="0.9" stroke-dasharray="1.5 1"/><path d="M4.5 3l4 1.7-1.6 0.6 1.5 1.8-0.8 0.6-1.4-1.8-1 1.2z" fill="#888"/></svg>
<div class="a dl" style="left:387.5px;top:182.5px;color:#9a9a9a">选择区域</div>
<div class="a dl" style="left:123px;top:200px">查找范围：</div>
<div class="a rad on" style="left:169.7px;top:199.7px"></div>
<div class="a dl" style="left:184px;top:200px">图纸本身的文字</div>
<div class="a rad" style="left:251px;top:199.7px"></div>
<div class="a dl" style="left:266px;top:200px;color:#e2bb82">本软件添加的文字和测量标注</div>
<div class="a chk" style="left:122px;top:213.7px"></div>
<div class="a dl" style="left:136.5px;top:213.5px">显示结果 （找到5个）</div>
<div class="a chk" style="left:376px;top:213.7px"></div>
<div class="a dl" style="left:390.5px;top:213.5px">标记所有结果</div>
<div class="a" style="left:122px;top:227px;width:324px;height:170px;background:#fff;border:1px solid #a9a9b0"></div>
<div class="a" style="left:123px;top:301px;width:296.5px;height:18.3px;background:#efefef"></div>
<svg class="a" style="left:0;top:0" width="460" height="400" viewBox="0 0 460 400">
<path d="M151.5 228V337.5M419.5 228V337.5" stroke="#ececec" stroke-width="1"/>
<path d="M123 263.5H419.5M123 282.5H419.5M123 300.5H419.5M123 319.5H419.5M123 337.5H419.5" stroke="#e6e6e6" stroke-width="1"/>
<rect x="190.2" y="301.2" width="191.3" height="18.3" fill="none" stroke="#ea3535" stroke-width="1.4"/>
</svg>
<div class="a dl" style="left:286px;top:231.5px;transform:translateX(-50%);font-weight:bold;color:#222">文本内容</div>
<div class="a num" style="left:137px;top:249.5px">1</div>
<div class="a num" style="left:137px;top:268px">2</div>
<div class="a num" style="left:137px;top:286px">3</div>
<div class="a num" style="left:137px;top:304.5px">4</div>
<div class="a num" style="left:137px;top:323px">5</div>
<div class="a num" style="left:286px;top:249.5px">1AL1</div>
<div class="a num" style="left:286px;top:268px">1AL1</div>
<div class="a num" style="left:286px;top:286px">1AL1~2AL1</div>
<div class="a num" style="left:286px;top:304.5px">1AL1</div>
<div class="a num" style="left:286px;top:323px">1AL1</div>
<div class="a btn" style="left:123px;top:401px;width:72.5px;height:15.5px"></div>
<div class="a" style="left:159px;top:403.5px;transform:translateX(-50%);font-size:9px;line-height:11px;color:#e5c796;white-space:nowrap">导出到<span style="font-family:'Liberation Mono',monospace;font-size:9.5px">Excel</span></div>
<div class="a btn" style="left:332.4px;top:401px;width:54.2px;height:15.5px"></div>
<div class="a dl" style="left:359.5px;top:403.5px;transform:translateX(-50%)">查看下一个</div>
<div class="a btn" style="left:390.9px;top:401px;width:54.2px;height:15.5px"></div>
<div class="a dl" style="left:418px;top:403.5px;transform:translateX(-50%)">完成</div>
<div id="sheettabs" class="a"></div>
<svg class="a" style="left:0;top:722px" width="1269" height="16" viewBox="0 722 1269 16">
<path d="M0 722H53.5L49 736.5H5.5z" fill="#000"/>
<path d="M53.5 722.5H104L99 736.5H58z" fill="#fff" stroke="#8a8a8a" stroke-width="0.8"/>
<path d="M0.5 722V736.5" stroke="#999" stroke-width="0.8"/>
</svg>
<div class="a" style="left:18.5px;top:724.5px;font-size:9px;line-height:10px;color:#e8e8e8;white-space:nowrap">模型</div>
<div class="a" style="left:61px;top:724.5px;font-size:9px;line-height:10px;color:#222;white-space:nowrap">建筑图纸</div>
<div id="status" class="a"></div>
<svg class="a" style="left:0;top:737px" width="120" height="20" viewBox="0 737 120 20"><text x="5.7" y="751" font-family="Liberation Mono" font-size="9.5" fill="#333" textLength="97.3" lengthAdjust="spacingAndGlyphs" xml:space="preserve">x = -204887 y = 526626</text></svg>
<div class="a" style="left:215px;top:738px;width:1px;height:19px;background:#dcd8d3"></div>
<div class="a" style="left:324px;top:738px;width:1px;height:19px;background:#dcd8d3"></div>
<div class="a" style="left:327px;top:742.5px;font-size:9px;line-height:11px;color:#333;white-space:nowrap">模型中的标注比例:1</div>
<div class="a" style="left:1180.5px;top:738px;width:1px;height:19px;background:#dcd8d3"></div>
<div class="a" style="left:1202.4px;top:738px;width:1px;height:19px;background:#dcd8d3"></div>
<div class="a" style="left:1225.5px;top:738px;width:1px;height:19px;background:#dcd8d3"></div>
<div class="a" style="left:1247.2px;top:738px;width:1px;height:19px;background:#dcd8d3"></div>
<svg class="a" style="left:0;top:737px" width="1269" height="20" viewBox="0 737 1269 20">
<path d="M1189 742.5h5.5l2.5 2.5v7.8h-9.5v-7.5z" fill="none" stroke="#c89a3e" stroke-width="1.2"/>
<text x="1192.5" y="750" font-size="4" font-weight="bold" fill="#c89a3e" text-anchor="middle" font-family="Liberation Sans">PDF</text>
<path d="M1211.5 744v8.5h8M1213.5 745.5h5.5v5.5h-5.5z" fill="none" stroke="#d9a63c" stroke-width="1.2"/>
<path d="M1214.5 750l2-2 1 1 1.5-1.5" fill="none" stroke="#d9a63c" stroke-width="1"/>
<text x="1217" y="744.5" font-size="3.5" font-weight="bold" fill="#d9a63c" text-anchor="middle" font-family="Liberation Sans">PDF</text>
<rect x="1231" y="741.8" width="12" height="11.7" rx="2" fill="#1a90e0"/>
<path d="M1233 745.2v5M1233 747.5h4.5M1239.8 745.5a2 2 0 1 1 0 4a2 2 0 1 1 0-4" fill="none" stroke="#fff" stroke-width="1.1"/>
<rect x="1254" y="742" width="10.5" height="11" rx="1.5" fill="none" stroke="#8ecdf3" stroke-width="1.2"/>
<path d="M1256 750.5h6.5" stroke="#2a9be6" stroke-width="1.3"/>
</svg>
<div class="a" style="left:501px;top:687px;width:267px;height:23.5px;background:#636363;border:1px solid #777"></div>
<svg class="a" style="left:0;top:680px" width="800" height="40" viewBox="0 680 800 40">
<g fill="none" stroke="#e8e8e8" stroke-width="1">
<rect x="507.3" y="694" width="4.6" height="4.6" rx="1.6"/><rect x="513.2" y="694" width="4.6" height="4.6" rx="1.6" transform="rotate(45 515.5 696.3)"/><rect x="507.3" y="699.6" width="4.6" height="4.6" rx="1.6"/><rect x="513.2" y="699.6" width="4.6" height="4.6" rx="1.6"/>
</g>
<path d="M524 690v17" stroke="#777" stroke-width="1"/>
<rect x="567.5" y="688.5" width="111" height="19.5" fill="#616161" stroke="#3a3a3a" stroke-width="1"/>
<rect x="570.6" y="693.7" width="9.8" height="9.8" fill="#e4580f"/>
<path d="M671 697.5h5l-2.5 3z" fill="#eee"/>
<g fill="none" stroke="#e8e8e8" stroke-width="1.1">
<path d="M694.5 693.5h-7v8.5h8.5v-4.5M689 703.5h8.5V696"/>
<path d="M691 699l5.5-5.5 1.5 1.5-5.5 5.5h-1.5z"/>
<path d="M713.4 693v11.5M707.7 698.7h11.5M711.5 695l1.9-2 1.9 2M711.5 702.4l1.9 2 1.9-2M709.6 696.8l-1.9 1.9 1.9 1.9M717.2 696.8l1.9 1.9-1.9 1.9"/>
<rect x="730" y="696" width="7" height="8" rx="1"/><path d="M732.5 696v-2a1 1 0 0 1 1-1h5.5a1 1 0 0 1 1 1v6.5a1 1 0 0 1-1 1H737"/>
<path d="M754 694h-2.5v9.5h5M753 693v2h3v-2z"/><rect x="755.5" y="697.5" width="6" height="6.5"/>
</g>
</svg>
<div class="a" style="left:526.8px;top:693.5px;font-size:9px;line-height:11px;color:#d8d8d8;white-space:nowrap">标注分类</div>
<div class="a" style="left:582.8px;top:693.5px;font-size:9px;line-height:11px;color:#eeeeee;white-space:nowrap">默认</div>
</body></html>
